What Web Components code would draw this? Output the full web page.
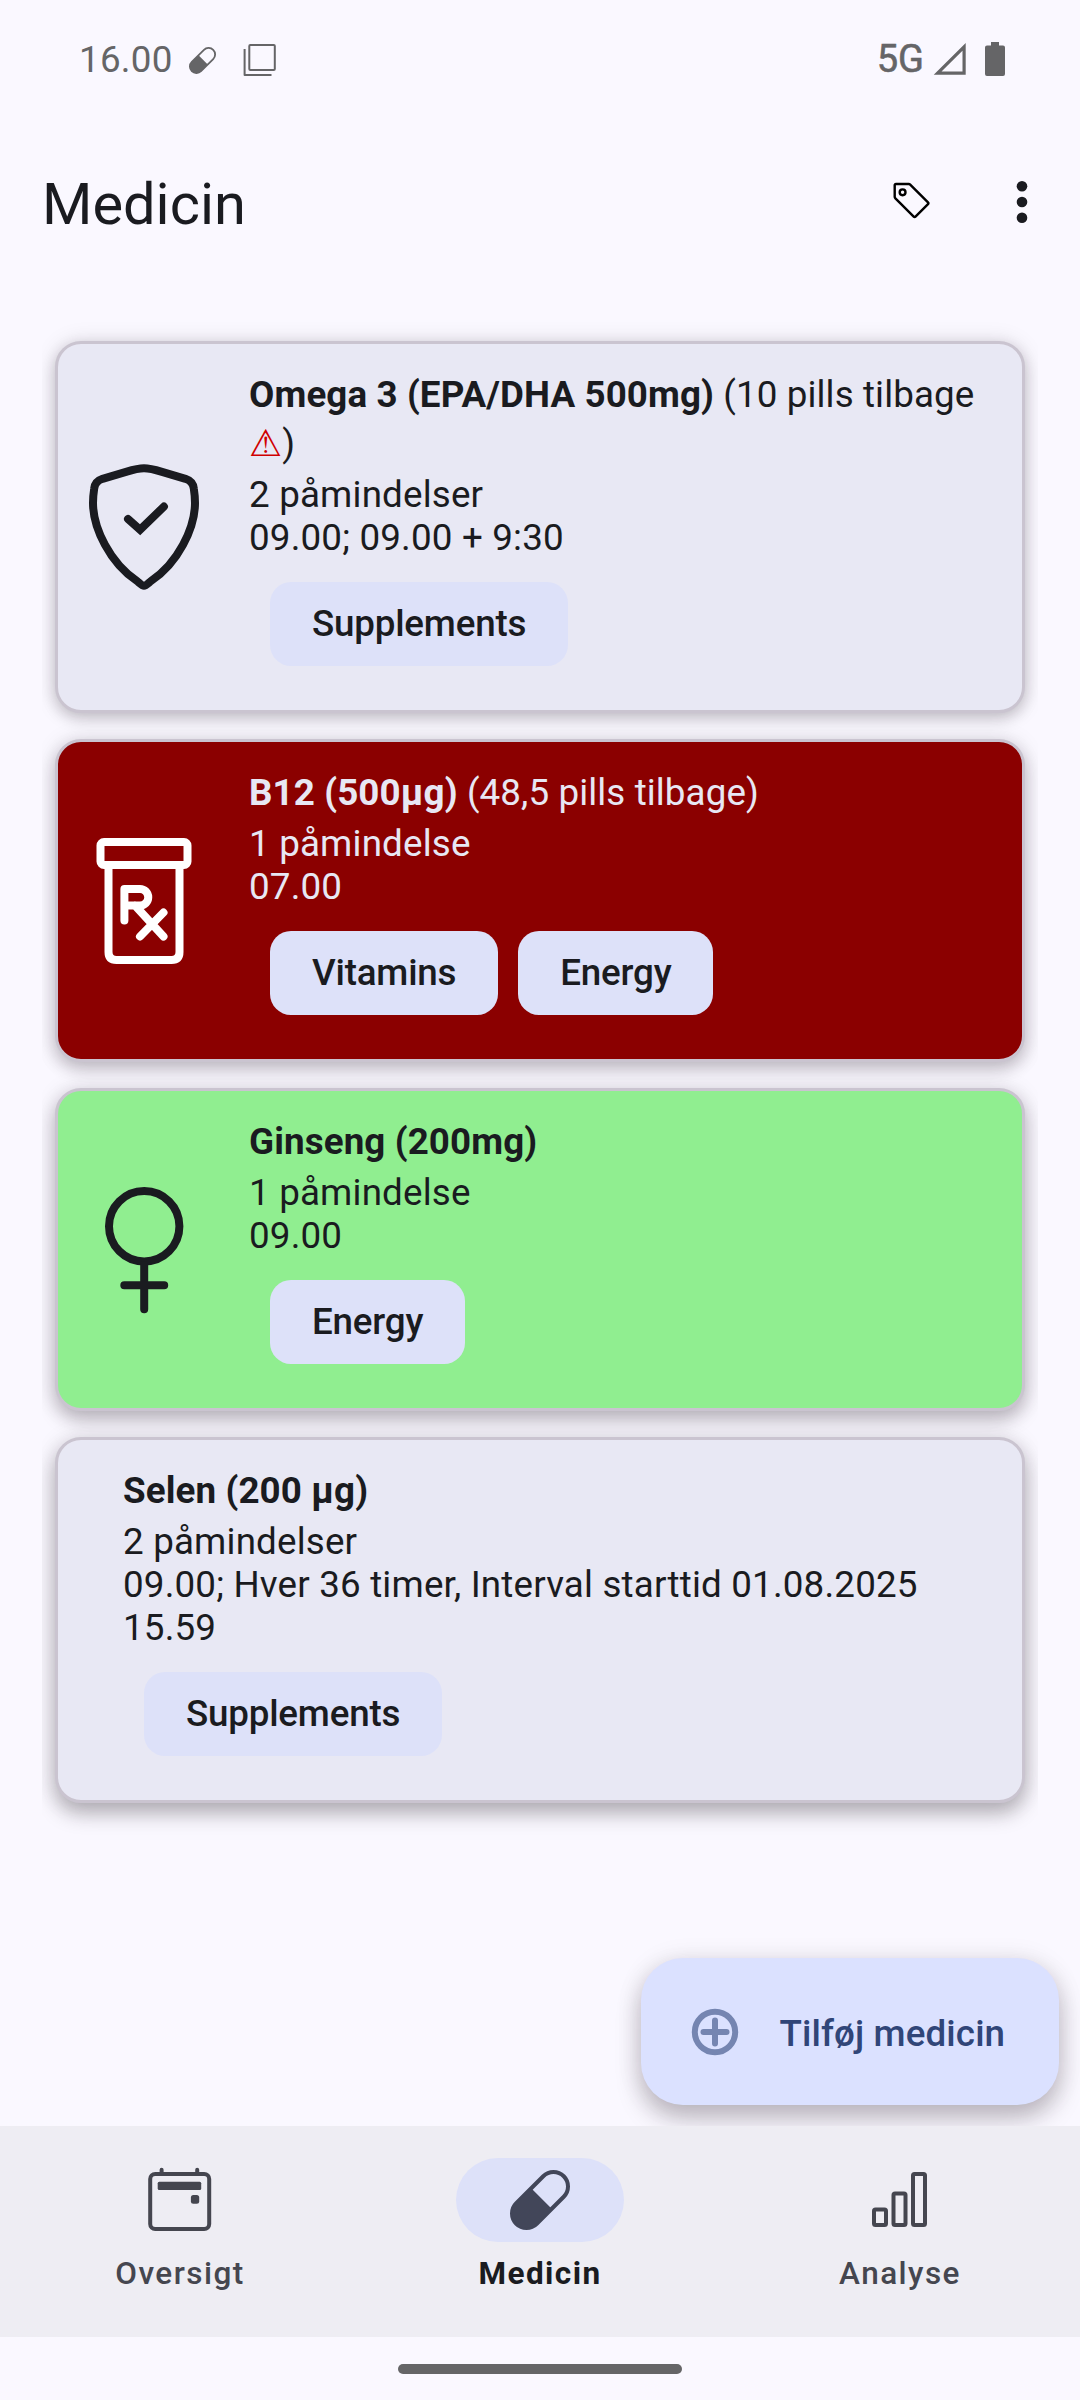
<!DOCTYPE html>
<html lang="da">
<head>
<meta charset="utf-8">
<title>Medicin</title>
<style>
  html, body { margin: 0; padding: 0; }
  body { width: 1080px; height: 2400px; overflow: hidden; background: #faf8ff; color: #1a1b20;
    font-family: Roboto, "Noto Sans", sans-serif; font-size: 36.75px; line-height: 43px; }
</style>
</head>
<body>
<medicine-app>
  <status-bar slot="status" time="16.00" network="5G"></status-bar>
  <app-header slot="header">Medicin</app-header>
  <med-card style="--sy:5px;--sb:14px;--sa:.2">
    <card-icon slot="icon" name="shield"></card-icon>
    <b slot="title">Omega 3 (EPA/DHA 500mg)</b><span slot="title"> (10 pills tilbage <warn-sign>⚠</warn-sign>)</span>
    <span slot="body">2 påmindelser<br>09.00; 09.00 + 9:30</span>
    <tag-chip slot="tags">Supplements</tag-chip>
  </med-card>
  <med-card style="--card:#8b0000;--text:#e8e7f3;--sy:7px;--sb:16px;--sa:.22">
    <card-icon slot="icon" name="rx" style="color:#fff"></card-icon>
    <b slot="title">B12 (500µg)</b><span slot="title"> (48,5 pills tilbage)</span>
    <span slot="body">1 påmindelse<br>07.00</span>
    <tag-chip slot="tags">Vitamins</tag-chip>
    <tag-chip slot="tags">Energy</tag-chip>
  </med-card>
  <med-card style="--card:#90ee90;--sy:9px;--sb:18px;--sa:.25">
    <card-icon slot="icon" name="female"></card-icon>
    <b slot="title">Ginseng (200mg)</b>
    <span slot="body">1 påmindelse<br>09.00</span>
    <tag-chip slot="tags">Energy</tag-chip>
  </med-card>
  <med-card style="--sy:11px;--sb:20px;--sa:.28">
    <b slot="title">Selen (200 µg)</b>
    <span slot="body">2 påmindelser<br>09.00; Hver 36 timer, Interval starttid 01.08.2025 15.59</span>
    <tag-chip slot="tags">Supplements</tag-chip>
  </med-card>
  <add-button slot="fab">Tilføj medicin</add-button>
  <nav-bar slot="nav">
    <nav-item icon="calendar">Oversigt</nav-item>
    <nav-item icon="pill" active>Medicin</nav-item>
    <nav-item icon="bars">Analyse</nav-item>
  </nav-bar>
</medicine-app>

<script>
const PILL = `<g transform="translate(30 30) rotate(45)" fill="none" stroke="currentColor" stroke-width="4">
  <rect x="-14.5" y="-33.6" width="29" height="67.2" rx="14.5"/>
  <path d="M-14.5 -2H14.5V19.1A14.5 14.5 0 0 1 -14.5 19.1Z" fill="currentColor" stroke="none"/></g>`;

const define = (name, render) => customElements.define(name, class extends HTMLElement {
  connectedCallback() {
    if (this.shadowRoot) return;
    this.attachShadow({ mode: 'open' }).innerHTML = render(this);
  }
});

define('medicine-app', () => `
<style>
  :host { display: flex; flex-direction: column; width: 1080px; height: 2400px; background: #faf8ff; }
  main { flex: 1; position: relative; overflow: hidden; padding: 0 42px; }
  .list { display: flex; flex-direction: column; gap: 26px; padding: 57px 13px 60px; overflow-x: clip; }
  .fab { position: absolute; right: 21px; bottom: 21px; }
  .gesture { height: 63px; display: flex; justify-content: center; align-items: flex-start; }
  .gesture i { width: 284px; height: 10px; margin-top: 27px; border-radius: 5px; background: #656567; }
</style>
<slot name="status"></slot>
<slot name="header"></slot>
<main><div class="list"><slot></slot></div><div class="fab"><slot name="fab"></slot></div></main>
<slot name="nav"></slot>
<div class="gesture"><i></i></div>`);

define('status-bar', el => `
<style>
  :host { display: flex; align-items: flex-start; justify-content: space-between; height: 136px; box-sizing: border-box;
    padding: 38px 75px 0 79px; color: #656567; }
  div { display: flex; align-items: flex-start; }
  svg { display: block; flex: none; }
  .time { letter-spacing: .25px; }
  .net { font-size: 38px; line-height: 43px; -webkit-text-stroke: .6px currentColor; }
</style>
<div><span class="time">${el.getAttribute('time')}</span>
  <svg width="27" height="27" viewBox="0 0 60 60" style="margin:9px 0 0 16px">${PILL}</svg>
  <svg width="34" height="34" viewBox="0 0 34 34" style="margin:5px 0 0 27px" fill="none" stroke="currentColor" stroke-width="2"><rect x="6.3" y="2" width="25.5" height="25" rx="1"/><path d="M1.6 6V32H28.5" stroke-linejoin="round"/></svg>
</div>
<div><span class="net">${el.getAttribute('network')}</span>
  <svg width="34" height="34" viewBox="0 0 34 34" style="margin:4px 0 0 9px" fill="none" stroke="currentColor" stroke-width="3.2"><path d="M4.6 31.2H31.1V4.8Z"/></svg>
  <svg width="20" height="34" viewBox="0 0 20 34" style="margin:4px 0 0 18px" fill="currentColor"><path d="M6 0H14V3.6H18Q20 3.6 20 5.6V32Q20 34 18 34H2Q0 34 0 32V5.6Q0 3.6 2 3.6H6Z"/></svg>
</div>`);

define('app-header', () => `
<style>
  :host { display: flex; align-items: center; justify-content: space-between; height: 148px; box-sizing: border-box; padding: 0 52px 16px 42px; }
  h1 { margin: 3px 0 0; font-size: 57.75px; line-height: 68px; font-weight: 400; }
  div { display: flex; align-items: center; gap: 84px; }
  svg { display: block; }
</style>
<h1><slot></slot></h1>
<div>
  <svg width="42" height="42" viewBox="890 181 42 42" fill="none" stroke="#000" stroke-width="2.4" stroke-linejoin="round"><path d="M896 184H908.7Q909.6 184 910.2 184.6L928 202.4Q928.9 203.3 928 204.2L915.5 216.7Q914.6 217.6 913.7 216.7L895.4 198.4Q894.7 197.7 894.7 196.8V185.3Q894.7 184 896 184Z"/><circle cx="902.6" cy="192.3" r="2.9"/></svg>
  <svg width="12" height="44" viewBox="0 0 12 44" fill="#1a1b20"><circle cx="6" cy="6.2" r="5.3"/><circle cx="6" cy="22" r="5.3"/><circle cx="6" cy="37.8" r="5.3"/></svg>
</div>`);

define('med-card', () => `
<style>
  :host { display: flex; align-items: center; box-sizing: border-box; width: 970px; border: 3px solid #cac4d0; border-radius: 26px;
    background: var(--card, #e8e8f4); color: var(--text, #1a1b20);
    box-shadow: 0 var(--sy) var(--sb) rgba(30,20,30,var(--sa)), 0 1px 22px rgba(30,20,30,.13); }
  .body { flex: 1; padding: 29px 30px 44px 65px; }
  .title { margin-bottom: 8px; letter-spacing: .11px; }
  .text { letter-spacing: .18px; }
  .tags { display: flex; gap: 20px; margin: 23px 0 0 21px; }
</style>
<slot name="icon"></slot>
<div class="body">
  <div class="title"><slot name="title"></slot></div>
  <div class="text"><slot name="body"></slot></div>
  <div class="tags"><slot name="tags"></slot></div>
</div>`);

const CARD_ICONS = {
  shield: `<g transform="translate(-69 -452)"><path d="M144 468.2C138 468.2 132 470 126 471.8L102.500 478.800C96.500 480.800 94.700 484 94.200 488.500C93.500 493 93 498 93 503C93 528 110 563 137 581C140 583.500 142 585.700 144 585.700C146 585.700 148 583.500 151 581C178 563 195 528 195 503C195 498 194.500 493 193.800 488.500C193.300 484 191.500 480.800 185.500 478.800L162 471.800C156 470 150 468.200 144 468.200Z"/><path d="M128 518.900L140.100 529.700L163.900 506.600" stroke-linejoin="miter"/></g>`,
  rx: `<g transform="translate(-69 -826)"><rect x="100.500" y="842" width="87" height="23" rx="3.500"/><path d="M108.500 865V952Q108.500 960 116.500 960H171.500Q179.500 960 179.500 952V865"/><path d="M124.400 920.500V889H140A8 8 0 0 1 140 905.500H126M135 905.500L163.500 936.500M163.500 912.500L140 936.500"/></g>`,
  female: `<g transform="translate(-69 -1175)"><circle cx="144.200" cy="1226.200" r="35.200"/><path d="M144.200 1265V1309.300M124.300 1285.300H164.200"/></g>`
};
define('card-icon', el => `
<style>:host { display: block; flex: none; width: 126px; color: inherit; } svg { display: block; margin-left: 11px; }</style>
<svg width="150" height="150" viewBox="0 0 150 150" fill="none" stroke="currentColor" stroke-width="8" stroke-linecap="round" stroke-linejoin="round">${CARD_ICONS[el.getAttribute('name')]}</svg>`);

define('warn-sign', () => `
<style>:host { display: inline-block; padding-top: 6px; color: #d00000; font-family: "DejaVu Sans", sans-serif; font-size: 37px; line-height: 43px; }</style><slot></slot>`);

define('tag-chip', () => `
<style>:host { display: flex; align-items: center; height: 84px; padding: 0 42px 2px; border-radius: 21px; background: #dde1f9; color: #1a1b20; font-weight: 500; letter-spacing: -.2px; box-sizing: border-box; }</style><slot></slot>`);

define('add-button', () => `
<style>
  :host { display: flex; align-items: center; box-sizing: border-box; width: 418px; height: 147px; padding-left: 48px; border-radius: 42px;
    background: #dbe1ff; color: #304578; font-weight: 500; letter-spacing: .12px;
    box-shadow: 0 14px 24px rgba(30,20,30,.25), 0 2px 26px rgba(30,20,30,.1); }
  svg { display: block; margin-right: 38.500px; flex: none; }
  span { padding-top: 3px; }
</style>
<svg width="52" height="52" viewBox="0 0 52 52" fill="none" stroke="#7585b1"><circle cx="26" cy="26" r="20.200" stroke-width="6"/><path d="M26 14.500V37.500M14.500 26H37.500" stroke-width="6" stroke-linecap="round"/></svg>
<span><slot></slot></span>`);

define('nav-bar', () => `
<style>:host { display: flex; height: 211px; background: #eeedf3; position: relative; }</style><slot></slot>`);

const NAV_ICONS = {
  calendar: `<g transform="translate(-150 -2170)"><rect x="150.200" y="2174" width="59" height="55" rx="5" stroke-width="4"/><path d="M161.600 2169.800V2173M197.200 2169.800V2173" stroke-width="4" stroke-linecap="round"/><path fill="currentColor" stroke="none" d="M159.200 2181.700H199.700Q201.200 2181.700 201.200 2183.200V2188.500Q201.200 2190 199.700 2190H159.200Q157.700 2190 157.700 2188.500V2183.200Q157.700 2181.700 159.200 2181.700Z"/><rect x="190.900" y="2195" width="8.300" height="8.700" rx="2.500" fill="currentColor" stroke="none"/></g>`,
  pill: PILL,
  bars: `<g transform="translate(-870 -2170)" stroke-width="4"><rect x="874" y="2209.500" width="12" height="15.500" rx="1.500"/><rect x="893.500" y="2193.500" width="12" height="31.500" rx="1.500"/><rect x="913" y="2174" width="12" height="51" rx="1.500"/></g>`
};
define('nav-item', el => `
<style>
  :host { flex: 1; display: flex; flex-direction: column; align-items: center; padding-top: 32px; color: #45464f;
    font-size: 31.500px; line-height: 37px; font-weight: 500; letter-spacing: 1.450px; }
  :host([active]) { font-weight: 700; color: #1a1b20; }
  .ind { width: 168px; height: 84px; border-radius: 42px; display: flex; align-items: center; justify-content: center; margin-bottom: 13px; }
  :host([active]) .ind { background: #dde1f9; color: #424659; }
  svg { display: block; overflow: visible; }
</style>
<div class="ind"><svg width="60" height="60" viewBox="0 0 60 60" fill="none" stroke="currentColor">${NAV_ICONS[el.getAttribute('icon')]}</svg></div>
<span><slot></slot></span>`);
</script>
</body>
</html>
